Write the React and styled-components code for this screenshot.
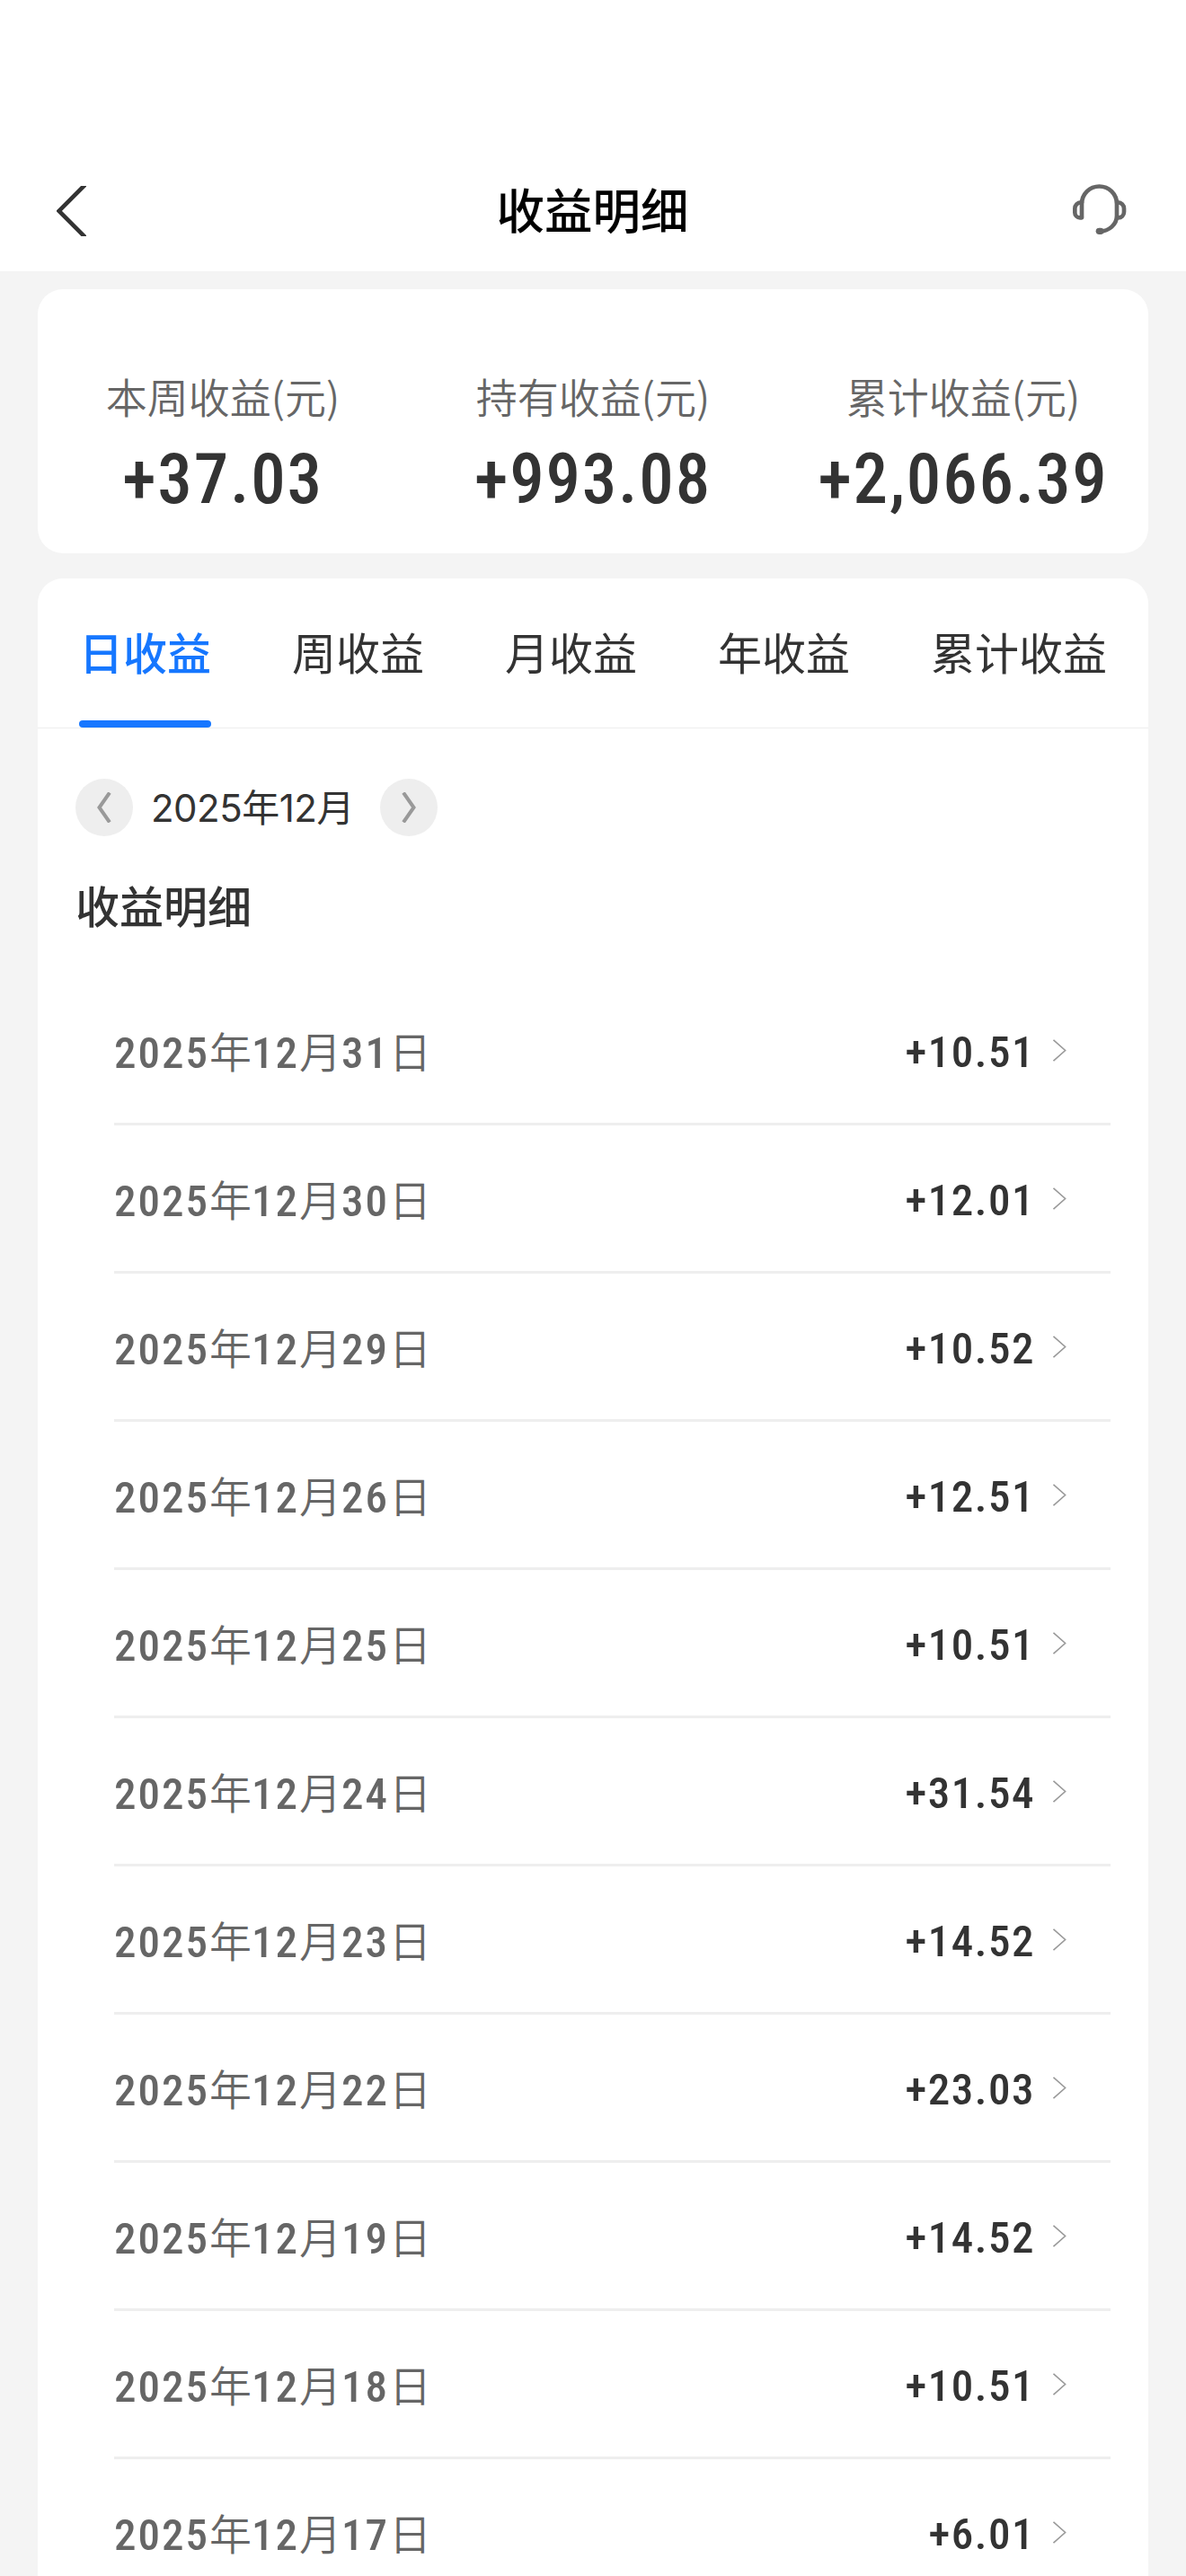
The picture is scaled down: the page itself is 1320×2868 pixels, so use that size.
import React from "react";
import styled, { createGlobalStyle } from "styled-components";

const summary = [
  { label: "本周收益(元)", value: "+37.03" },
  { label: "持有收益(元)", value: "+993.08" },
  { label: "累计收益(元)", value: "+2,066.39" },
];

const tabs = ["日收益", "周收益", "月收益", "年收益", "累计收益"];

const records = [
  { day: 31, amount: "+10.51" },
  { day: 30, amount: "+12.01" },
  { day: 29, amount: "+10.52" },
  { day: 26, amount: "+12.51" },
  { day: 25, amount: "+10.51" },
  { day: 24, amount: "+31.54" },
  { day: 23, amount: "+14.52" },
  { day: 22, amount: "+23.03" },
  { day: 19, amount: "+14.52" },
  { day: 18, amount: "+10.51" },
  { day: 17, amount: "+6.01" },
];

const BackIcon = () => (
  <svg width="33" height="56" viewBox="0 0 99 168" fill="none">
    <path d="M103 -12 L8 83.5 L103 179" stroke="#333" strokeWidth="14" />
  </svg>
);

const ServiceIcon = () => (
  <svg width="60" height="56" viewBox="0 0 180 168" fill="none">
    <g stroke="#666" strokeWidth="14">
      <path d="M30 112 V66 A58.5 58.5 0 0 1 147 66 V106 C147 134 122 157 90 158" />
      <path d="M30 61 H27 A20 20 0 0 0 7 81 V95 A17 17 0 0 0 24 112 H30" strokeLinejoin="round" strokeLinecap="round" />
      <path d="M147 61 H151 A20 20 0 0 1 171 81 V93 A19 19 0 0 1 152 112 H147" />
    </g>
    <rect x="77" y="146" width="27" height="22" rx="11" fill="#666" />
  </svg>
);

const RowArrow = () => (
  <svg width="15" height="25" viewBox="0 0 15 25" fill="none">
    <path d="M0.5 0.8 L13.6 12.5 L0.5 24.2" stroke="#999" strokeWidth="1.6" />
  </svg>
);

const MonthArrow = ({ flip }) => (
  <svg width="18" height="34" viewBox="0 0 18 34" fill="none">
    <path d={flip ? "M3 0.5 L14.5 17 L3 33.5" : "M15 0.5 L3.5 17 L15 33.5"} stroke="#999" strokeWidth="4" />
  </svg>
);

const App = () => {
  return (
    <>
      <GlobalStyle />
      <Page>
        <Header>
          <IconBtn $top={4}>
            <BackIcon />
          </IconBtn>
          <h1>收益明细</h1>
          <IconBtn $top={0}>
            <ServiceIcon />
          </IconBtn>
        </Header>
        <Content>
          <SummaryCard>
            {summary.map((item) => (
              <SummaryItem key={item.label}>
                <SummaryLabel>{item.label}</SummaryLabel>
                <SummaryValue>{item.value}</SummaryValue>
              </SummaryItem>
            ))}
          </SummaryCard>
          <DetailCard>
            <TabBar>
              {tabs.map((tab, i) => (
                <Tab key={tab} $active={i === 0}>
                  {tab}
                </Tab>
              ))}
            </TabBar>
            <MonthPicker>
              <MonthBtn>
                <MonthArrow />
              </MonthBtn>
              <MonthText>2025年12月</MonthText>
              <MonthBtn>
                <MonthArrow flip />
              </MonthBtn>
            </MonthPicker>
            <SectionTitle>收益明细</SectionTitle>
            <RecordList>
              {records.map((record) => (
                <Record key={record.day}>
                  <RecordDate>
                    <b>2025</b>年<b>12</b>月<b>{record.day}</b>日
                  </RecordDate>
                  <RecordAmount>{record.amount}</RecordAmount>
                  <RowArrow />
                </Record>
              ))}
            </RecordList>
          </DetailCard>
        </Content>
      </Page>
    </>
  );
};

const GlobalStyle = createGlobalStyle`
  * {
    box-sizing: border-box;
    margin: 0;
    padding: 0;
  }

  body {
    background-color: #f4f4f4;
    font-family: "Noto Sans CJK SC", sans-serif;
    color: #333;
  }

  button {
    border: none;
    background: none;
    font: inherit;
    color: inherit;
  }

  svg {
    display: block;
    flex-shrink: 0;
  }
`;

const Page = styled.div`
  width: 1320px;
  height: 2868px;
  overflow: hidden;
  background-color: #f4f4f4;
`;

const Header = styled.header`
  height: 302px;
  padding: 164px 66px 0 63px;
  display: flex;
  justify-content: space-between;
  align-items: center;
  background-color: #fff;

  h1 {
    color: #000;
    font-size: 53.5px;
    font-weight: 500;
    line-height: 76px;
    padding: 0 0 3px 2px;
  }
`;

const IconBtn = styled.button`
  width: 60px;
  height: 60px;
  padding-top: ${(props) => props.$top}px;
  display: flex;
  align-items: center;
`;

const Content = styled.main`
  padding: 20px 42px 0;
  display: flex;
  flex-direction: column;
  gap: 28px;
`;

const SummaryCard = styled.section`
  height: 294px;
  padding-top: 85px;
  border-radius: 28px;
  background-color: #fff;
  display: grid;
  grid-template-columns: repeat(3, 1fr);
`;

const SummaryItem = styled.div`
  display: flex;
  flex-direction: column;
  align-items: center;
`;

const SummaryLabel = styled.span`
  color: #666;
  font-size: 46px;
  font-weight: 350;
  line-height: 66px;
`;

const SummaryValue = styled.strong`
  font-family: Roboto, sans-serif;
  font-size: 77px;
  font-weight: 500;
  font-stretch: condensed;
  line-height: 90px;
  letter-spacing: 1.8px;
  margin-top: 16px;
`;

const DetailCard = styled.section`
  height: 2300px;
  border-radius: 28px;
  background-color: #fff;
`;

const TabBar = styled.nav`
  height: 167px;
  padding: 0 46px;
  display: flex;
  justify-content: space-between;
  border-bottom: 1px solid #eee;
`;

const Tab = styled.button`
  height: 166px;
  padding-top: 46px;
  color: ${(props) => (props.$active ? "#1677ff" : "#333")};
  font-size: 49px;
  font-weight: ${(props) => (props.$active ? 500 : 400)};
  line-height: 70px;
  display: flex;
  flex-direction: column;

  &::after {
    content: "";
    width: 100%;
    height: 8px;
    border-radius: 4px;
    margin-top: auto;
    background-color: ${(props) => (props.$active ? "#1677ff" : "transparent")};
  }
`;

const MonthPicker = styled.div`
  height: 64px;
  margin: 56px 0 0 42px;
  display: flex;
  align-items: center;
`;

const MonthBtn = styled.button`
  width: 64px;
  height: 64px;
  border-radius: 50%;
  background-color: #eee;
  display: flex;
  justify-content: center;
  align-items: center;
`;

const MonthText = styled.span`
  width: 275px;
  padding: 0 0 5px 20px;
  font-family: Inter, "Noto Sans CJK SC", sans-serif;
  font-size: 42px;
  font-weight: 370;
  letter-spacing: -0.5px;
  white-space: nowrap;
`;

const SectionTitle = styled.h2`
  margin: 41px 0 0 42px;
  font-size: 49px;
  font-weight: 500;
  line-height: 70px;
`;

const RecordList = styled.ul`
  list-style: none;
  margin-top: 46px;
  padding: 0 42px 0 85px;
`;

const Record = styled.li`
  height: 165px;
  padding-right: 49px;
  display: flex;
  align-items: center;
  border-bottom: 3px solid #eee;
`;

const RecordDate = styled.span`
  flex: 1;
  padding-bottom: 2px;
  color: #666;
  font-size: 47px;
  font-weight: 350;

  b {
    font-family: Roboto, sans-serif;
    font-size: 49px;
    font-weight: 500;
    font-stretch: condensed;
    letter-spacing: 2px;
  }
`;

const RecordAmount = styled.span`
  margin-right: 20px;
  padding-top: 5px;
  font-family: Roboto, sans-serif;
  font-size: 49px;
  font-weight: 500;
  font-stretch: condensed;
  letter-spacing: 1.5px;
`;

export default App;
